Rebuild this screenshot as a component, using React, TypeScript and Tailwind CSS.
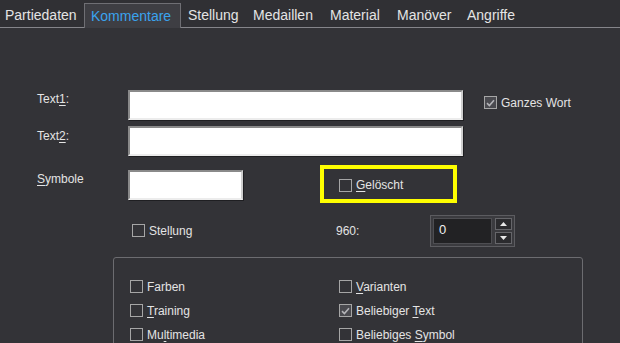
import React from 'react';

const font = "font-['Liberation_Sans',Arial,sans-serif]";

function Key({ children }: { children: React.ReactNode }) {
  return <span className='underline underline-offset-[2px] decoration-[1px]'>{children}</span>;
}

function Check({ checked = false }: { checked?: boolean }) {
  return (
    <span
      className={
        'w-[13px] h-[13px] shrink-0 border border-[#a6a6a6] flex items-center justify-center ' +
        (checked ? 'bg-[#4a4a4f]' : 'bg-transparent')
      }
    >
      {checked && (
        <svg width='9' height='8' viewBox='0 0 9 8'>
          <path d='M1 4.2 L3.4 6.5 L8 1.3' stroke='#b4b4b8' strokeWidth='1.6' fill='none' />
        </svg>
      )}
    </span>
  );
}

function CheckItem({ checked, children }: { checked?: boolean; children: React.ReactNode }) {
  return (
    <div className='flex items-center gap-[4px] h-[17px]'>
      <Check checked={checked} />
      <span className='leading-[16px]'>{children}</span>
    </div>
  );
}

function TextBox({ w }: { w: string }) {
  return (
    <div
      className={
        w +
        ' h-[30px] bg-white border-2 border-t-[#8a8a8a] border-l-[#8a8a8a] border-b-[#ececec] border-r-[#cfcfcf] shadow-[1px_1px_0_#1f1f22]'
      }
    />
  );
}

const tabs = [
  { name: 'Partiedaten', w: 'w-[84px]', pl: 'pl-[5px]' },
  { name: 'Kommentare', w: 'w-[97px]', pl: 'pl-[6px]', active: true },
  { name: 'Stellung', w: 'w-[65px]', pl: 'pl-[7px]' },
  { name: 'Medaillen', w: 'w-[77px]', pl: 'pl-[7px]' },
  { name: 'Material', w: 'w-[67px]', pl: 'pl-[7px]' },
  { name: 'Manöver', w: 'w-[70px]', pl: 'pl-[7px]' },
  { name: 'Angriffe', w: 'w-[60px]', pl: 'pl-[7px]' },
];

export default function App() {
  return (
    <div className={'w-[620px] h-[343px] overflow-hidden bg-[#333337] text-[#e4e4e4] ' + font}>
      {/* tab strip */}
      <div className='h-[28px] bg-[#303034] flex items-end border-b border-[#85858a]'>
        {tabs.map((t) => (
          <div
            key={t.name}
            className={
              t.w +
              ' ' +
              t.pl +
              ' text-[14px] leading-[24px] ' +
              (t.active
                ? 'h-[25px] -mb-px bg-[#3e3e43] border border-b-0 border-[#6f6f74] text-[#3aa3ee] pl-[5px]'
                : 'h-[24px]')
            }
          >
            {t.name}
          </div>
        ))}
      </div>

      <div className='pl-[37px] pt-[62px] text-[12px]'>
        {/* Text1 */}
        <div className='flex items-start'>
          <div className='w-[91px] pt-[1px] leading-[16px]'>
            Text<Key>1</Key>:
          </div>
          <TextBox w='w-[335px]' />
          <div className='ml-[21px] mt-[4px]'>
            <CheckItem checked>Ganzes Wort</CheckItem>
          </div>
        </div>

        {/* Text2 */}
        <div className='flex items-start mt-[6px]'>
          <div className='w-[91px] pt-[2px] leading-[16px]'>
            Text<Key>2</Key>:
          </div>
          <TextBox w='w-[335px]' />
        </div>

        {/* Symbole + Gelöscht */}
        <div className='flex items-start mt-[9px]'>
          <div className='w-[91px] pt-[6px] leading-[16px]'>
            <Key>S</Key>ymbole
          </div>
          <div className='mt-[5px]'>
            <TextBox w='w-[115px]' />
          </div>
          <div className='ml-[77px] w-[137px] h-[38px] border-[4px] border-[#ffff00] flex items-center pl-[15px] pt-[2px]'>
            <CheckItem>
              <Key>G</Key>elöscht
            </CheckItem>
          </div>
        </div>

        {/* Stellung + 960 spin */}
        <div className='flex items-center mt-[11px] h-[33px]'>
          <div className='ml-[95px] w-[204px]'>
            <CheckItem>
              Stel<Key>l</Key>ung
            </CheckItem>
          </div>
          <div className='w-[94px] leading-[16px]'>960:</div>
          <div className='w-[85px] h-[32px] bg-[#3b3b3f] border border-[#5c5c60] p-[2px] flex gap-[3px]'>
            <div className='w-[59px] bg-[#222224] border border-[#4e4e52] pl-[5px] pt-[3px] text-[13px] leading-[16px] text-[#f0f0f0]'>
              0
            </div>
            <div className='w-[17px] flex flex-col gap-[2px]'>
              <div className='flex-1 bg-[#2b2b2e] border border-[#66666a] flex items-center justify-center'>
                <svg width='7' height='4' viewBox='0 0 7 4'>
                  <path d='M0 4 L3.5 0 L7 4 Z' fill='#e8e8e8' />
                </svg>
              </div>
              <div className='flex-1 bg-[#2b2b2e] border border-[#66666a] flex items-center justify-center'>
                <svg width='7' height='4' viewBox='0 0 7 4'>
                  <path d='M0 0 L3.5 4 L7 0 Z' fill='#e8e8e8' />
                </svg>
              </div>
            </div>
          </div>
        </div>

        {/* group box */}
        <div className='ml-[76px] mt-[10px] w-[470px] h-[120px] border border-[#6c6c70] rounded-t-[3px] pt-[20px] pl-[16px]'>
          <div className='grid grid-cols-[209px_1fr] gap-y-[7px]'>
            <CheckItem>Farben</CheckItem>
            <CheckItem>
              <Key>V</Key>arianten
            </CheckItem>
            <CheckItem>
              <Key>T</Key>raining
            </CheckItem>
            <CheckItem checked>
              Beliebiger <Key>T</Key>ext
            </CheckItem>
            <CheckItem>
              Mu<Key>l</Key>timedia
            </CheckItem>
            <CheckItem>
              Beliebiges <Key>S</Key>ymbol
            </CheckItem>
          </div>
        </div>
      </div>
    </div>
  );
}
